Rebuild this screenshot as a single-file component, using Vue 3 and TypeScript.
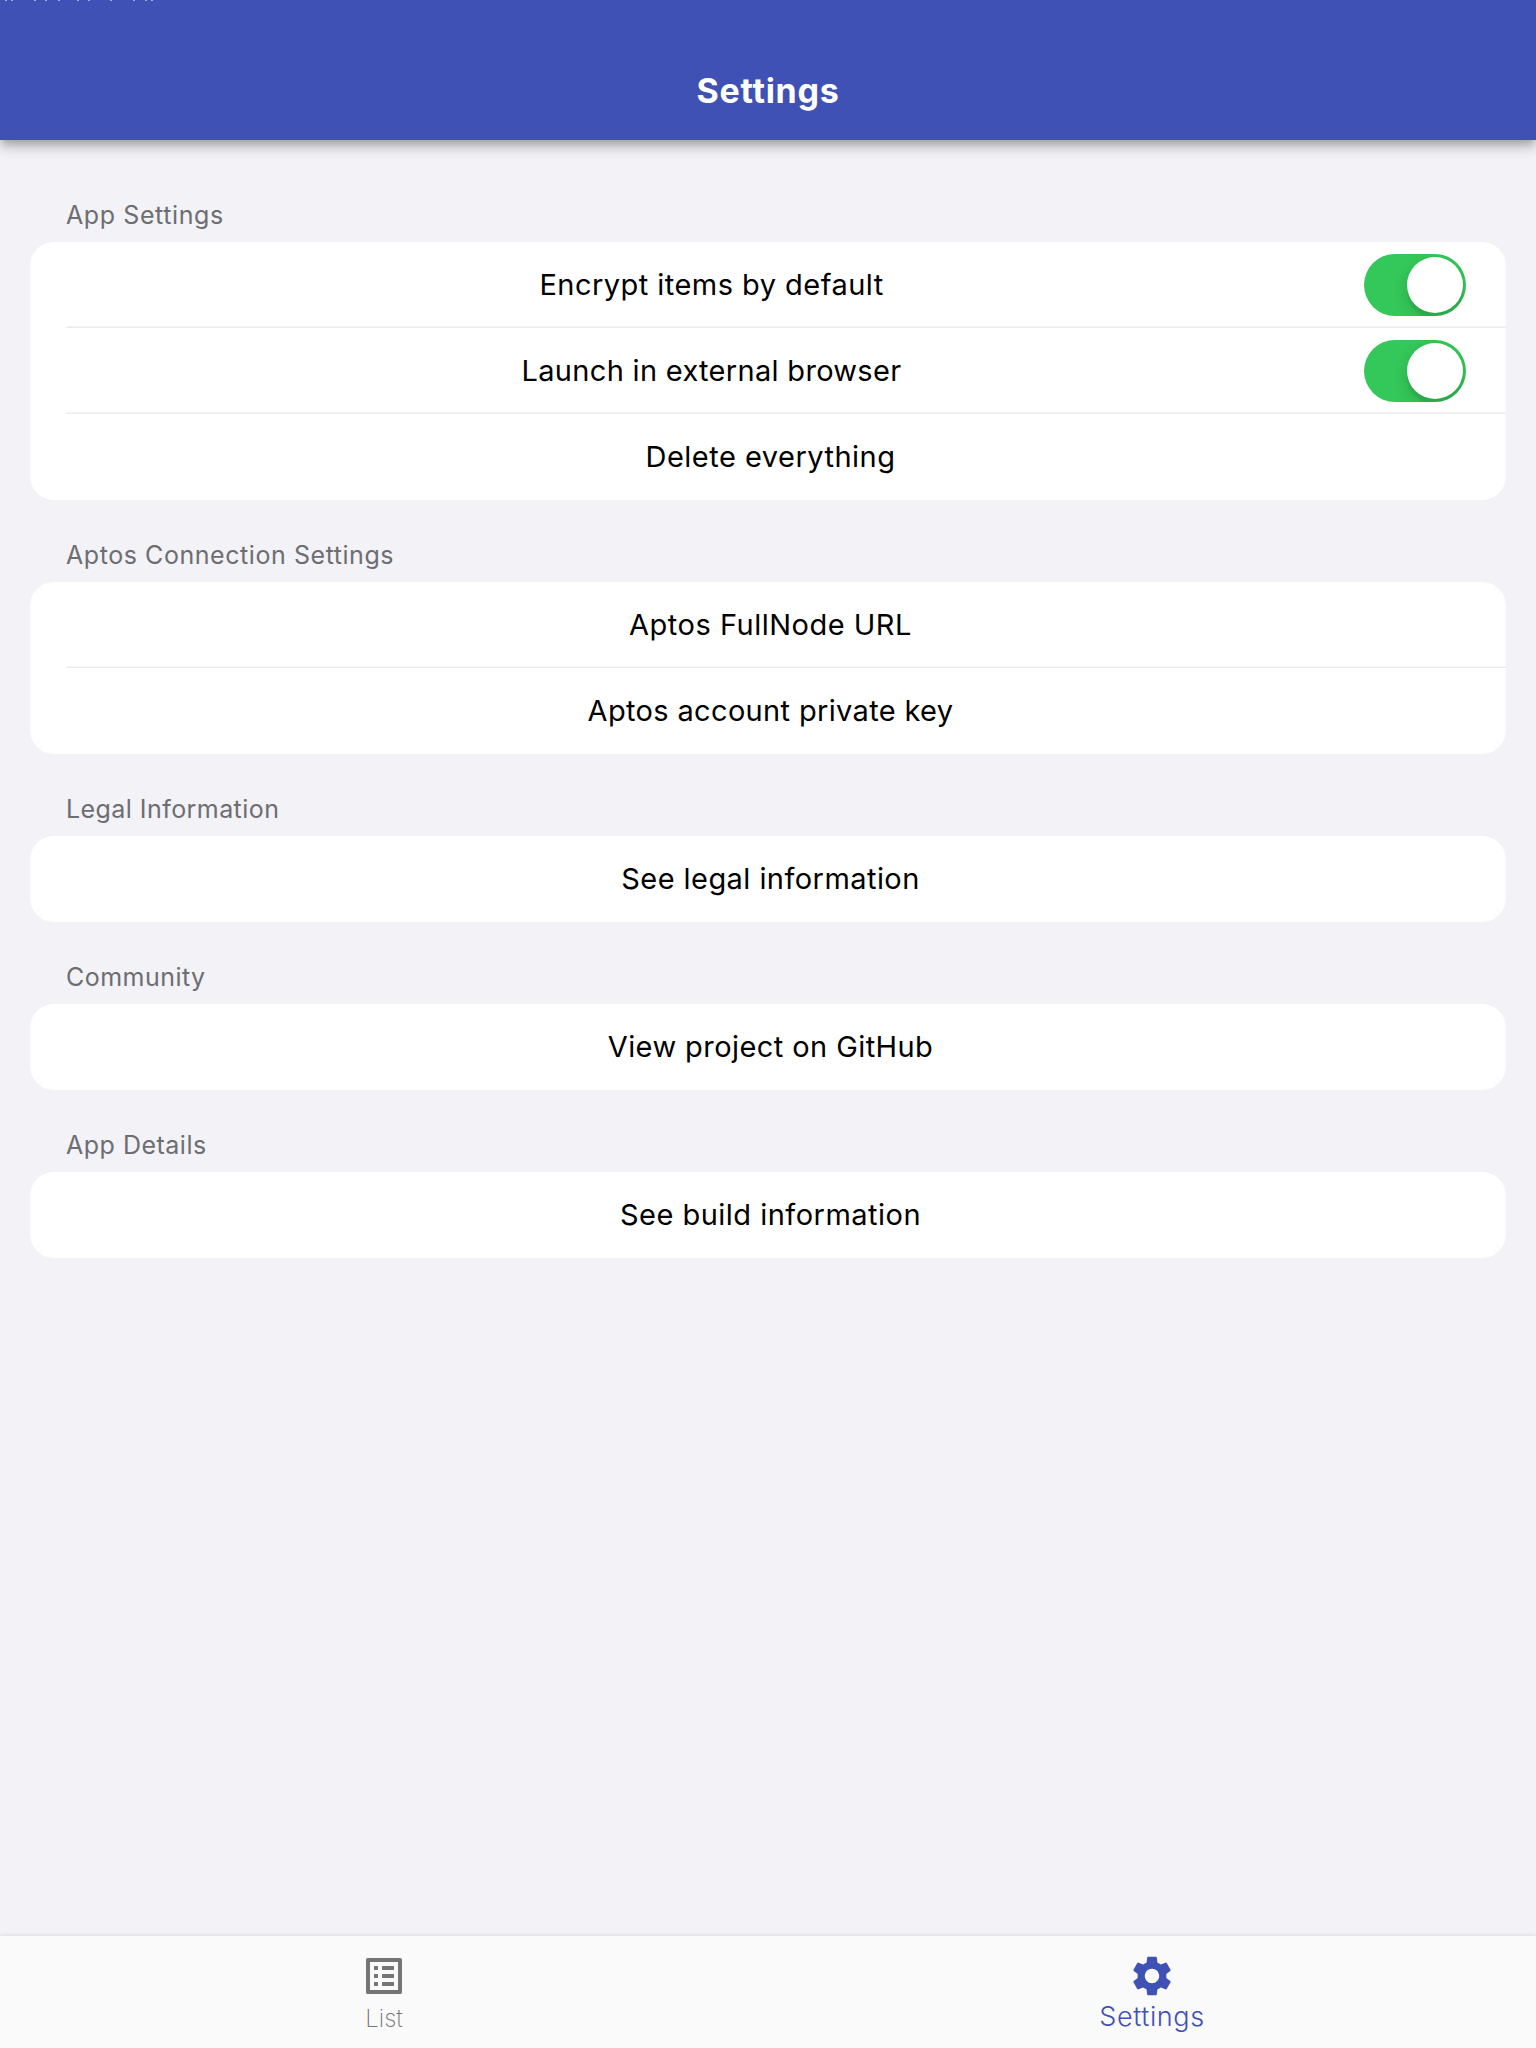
<script setup lang="ts">
interface Row { label: string; toggle?: boolean; spacing: number }
interface Section { title: string; spacing: number; rows: Row[] }

const sections: Section[] = [
  {
    title: 'App Settings', spacing: 0.6,
    rows: [
      { label: 'Encrypt items by default', toggle: true, spacing: 0.46 },
      { label: 'Launch in external browser', toggle: true, spacing: 0.31 },
      { label: 'Delete everything', spacing: 0.48 },
    ],
  },
  {
    title: 'Aptos Connection Settings', spacing: 0.56,
    rows: [
      { label: 'Aptos FullNode URL', spacing: 0.5 },
      { label: 'Aptos account private key', spacing: 0.34 },
    ],
  },
  { title: 'Legal Information', spacing: 0.44, rows: [{ label: 'See legal information', spacing: 0.44 }] },
  { title: 'Community', spacing: 0.47, rows: [{ label: 'View project on GitHub', spacing: 0.42 }] },
  { title: 'App Details', spacing: 0.5, rows: [{ label: 'See build information', spacing: 0.48 }] },
]

// Lower edge of the line of small text that is cut off by the top of the screen
const specks: number[] = [5, 11, 34, 45, 58, 77, 88, 110, 133, 145, 151]
</script>

<template>
  <div class="screen">
    <header class="bar">
      <svg class="specks" width="160" height="1" viewBox="0 0 160 1"><rect v-for="x in specks" :key="x" :x="x" y="0" width="2" height="1" fill="#a3abd9" /></svg>
      <h1>Settings</h1>
    </header>
    <main>
      <section v-for="s in sections" :key="s.title">
        <h2 :style="{ letterSpacing: s.spacing + 'px' }">{{ s.title }}</h2>
        <div class="card">
          <div v-for="r in s.rows" :key="r.label" class="row">
            <span class="label" :style="{ letterSpacing: r.spacing + 'px' }">{{ r.label }}</span>
            <span v-if="r.toggle" class="toggle"><i></i></span>
          </div>
        </div>
      </section>
    </main>
    <nav>
      <a class="tab list">
        <svg width="48" height="48" viewBox="0 0 24 24"><path fill="currentColor" d="M11 7h6v2h-6zm0 4h6v2h-6zm0 4h6v2h-6zM7 7h2v2H7zm0 4h2v2H7zm0 4h2v2H7zM20.1 3H3.9c-.5 0-.9.4-.9.9v16.200c0 .4.4.9.9.9h16.200c.4 0 .9-.5.9-.9V3.900c0-.5-.5-.9-.9-.9zM19 19H5V5h14v14z" /></svg>
        <span>List</span>
      </a>
      <a class="tab active">
        <svg width="48" height="48" viewBox="0 0 24 24"><path fill="currentColor" d="M19.140 12.940c.04-.3.060-.610.060-.940 0-.320-.020-.640-.070-.940l2.030-1.580c.180-.140.230-.410.120-.610l-1.920-3.320c-.120-.220-.370-.290-.590-.220l-2.390.960c-.5-.380-1.030-.7-1.620-.940L14.400 2.810c-.040-.240-.240-.410-.480-.410h-3.840c-.240 0-.430.170-.470.410L9.250 5.350c-.590.240-1.130.570-1.620.940l-2.390-.960c-.220-.080-.470 0-.590.220L2.740 8.870c-.120.210-.080.470.120.610l2.030 1.580c-.050.3-.090.630-.090.940s.020.640.070.940l-2.030 1.580c-.180.140-.230.410-.120.610l1.920 3.320c.120.220.370.290.590.220l2.390-.960c.5.380 1.030.7 1.620.940l.360 2.540c.050.240.240.410.480.410h3.840c.240 0 .440-.170.470-.410l.360-2.540c.590-.240 1.130-.560 1.620-.940l2.390.960c.220.080.470 0 .590-.220l1.920-3.320c.120-.220.070-.470-.120-.610l-2.010-1.580zM12 15.600c-1.980 0-3.600-1.620-3.600-3.600s1.620-3.600 3.600-3.600 3.600 1.620 3.600 3.600-1.620 3.600-3.600 3.600z" /></svg>
        <span>Settings</span>
      </a>
    </nav>
  </div>
</template>

<style>
body { margin: 0; background: #f2f2f7; }
</style>
<style scoped>
.screen { display: flex; flex-direction: column; width: 100%; height: 2048px; overflow: hidden; background: #f2f2f7; font-family: Inter, "Liberation Sans", sans-serif; }
.bar { position: relative; height: 140px; flex: none; box-sizing: border-box; padding-top: 60px; background: #3f51b5; box-shadow: 0 4px 8px -2px rgba(0,0,0,.2), 0 8px 10px rgba(0,0,0,.14), 0 2px 20px rgba(0,0,0,.12); text-align: center; }
.specks { position: absolute; left: 0; top: 0; }
h1 { margin: 0; font-size: 34px; font-weight: 700; line-height: 62px; letter-spacing: .75px; color: #fff; }
main { flex: 1; min-height: 0; padding: 42px 30px 0; }
section { margin-bottom: 22px; }
h2 { margin: 0; height: 60px; padding-left: 36px; font-size: 25px; font-weight: 400; line-height: 66px; color: #6d6d72; }
.card { background: #fff; border-radius: 24px; overflow: hidden; }
.row { display: flex; align-items: center; height: 86px; padding-left: 36px; position: relative; }
.row + .row::before { content: ""; position: absolute; left: 36px; right: 0; top: -2px; height: 2px; background: linear-gradient(#f6f6f6 50%, #ebebeb 50%); }
.label { flex: 1; text-align: center; font-size: 29px; font-weight: 400; color: #000; padding: 0 31px 2px 0; }
.label:not(:last-child) { padding-right: 7px; }
.toggle { width: 102px; height: 62px; flex: none; margin-right: 40px; border-radius: 31px; background: #34c759; overflow: hidden; }
.toggle i { display: block; width: 56px; height: 56px; margin: 3px 3px 3px 43px; border-radius: 50%; background: #fff; box-shadow: 0 6px 16px rgba(0,0,0,.15), 0 6px 2px rgba(0,0,0,.06); }
nav { display: flex; height: 112px; flex: none; background: #fafafa; box-shadow: 0 -1px 4px rgba(0,0,0,.09); }
.tab { flex: 1; display: flex; flex-direction: column; align-items: center; padding-top: 16px; color: #757575; }
.tab span { font-size: 24px; font-weight: 250; line-height: 38px; }
.active { color: #3f51b5; }
.active span { font-size: 27px; font-weight: 300; line-height: 34px; letter-spacing: .6px; }
</style>
